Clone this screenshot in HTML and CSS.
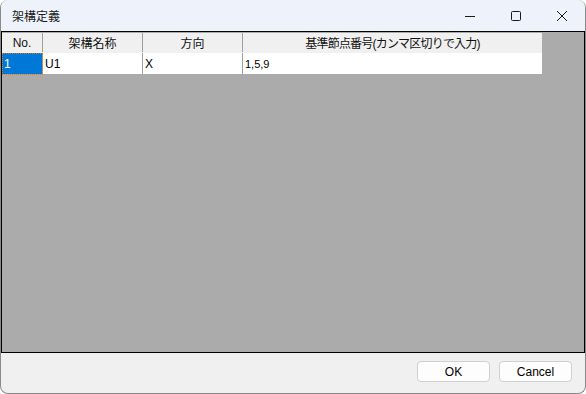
FILE: index.html
```html
<!DOCTYPE html>
<html lang="ja">
<head>
  <meta charset="UTF-8">
  <title>架構定義</title>
  <link rel="stylesheet" href="styles.css">
</head>
<body>

<div class="window">
  <div class="titlebar">
    <span class="title">架構定義</span>
    <div class="controls">
      <span class="ctl">
        <svg width="12" height="12" viewBox="0 0 12 12"><path d="M1 6.5h10" stroke="#1a1a1a" stroke-width="1"/></svg>
      </span>
      <span class="ctl">
        <svg width="12" height="12" viewBox="0 0 12 12"><rect x="1.5" y="1.5" width="9" height="9" rx="1" fill="none" stroke="#1a1a1a" stroke-width="1"/></svg>
      </span>
      <span class="ctl">
        <svg width="12" height="12" viewBox="0 0 12 12"><path d="M1 1l10 10M11 1L1 11" stroke="#1a1a1a" stroke-width="1"/></svg>
      </span>
    </div>
  </div>

  <div class="grid">
    <table class="sheet">
      <thead>
        <tr>
          <th class="c-no">No.</th>
          <th class="c-name">架構名称</th>
          <th class="c-dir">方向</th>
          <th class="c-nodes">基準節点番号(カンマ区切りで入力)</th>
        </tr>
      </thead>
      <tbody>
        <tr>
          <td class="c-no selected">1</td>
          <td>U1</td>
          <td>X</td>
          <td>1,5,9</td>
        </tr>
      </tbody>
    </table>
  </div>

  <div class="footer">
    <button class="btn">OK</button>
    <button class="btn">Cancel</button>
  </div>
</div>

</body>
</html>
```

FILE: styles.css
```css
html, body {
  margin: 0;
  padding: 0;
  background: #ffffff;
}
body {
  font-family: "Liberation Sans", "Noto Sans CJK JP", sans-serif;
  font-size: 12px;
  color: #000;
}
.window {
  width: 586px;
  height: 394px;
  box-sizing: border-box;
  border: 1px solid #8a8a8a;
  border-top: none;
  border-radius: 8px;
  overflow: hidden;
  background: #f0f0f0;
  display: flex;
  flex-direction: column;
}
.titlebar {
  height: 31px;
  flex: none;
  background: #eef3fb;
  display: flex;
  align-items: center;
}
.title {
  padding-left: 11px;
  font-size: 12px;
  color: #1a1a1a;
}
.controls {
  margin-left: auto;
  display: flex;
  height: 100%;
}
.ctl {
  width: 46px;
  display: flex;
  align-items: center;
  justify-content: center;
}
.grid {
  height: 322px;
  flex: none;
  box-sizing: border-box;
  border: 1px solid #000;
  background: #ababab;
  padding: 1px 0 0 0;
}
.sheet {
  border-collapse: collapse;
  table-layout: fixed;
  width: 540px;
}
.sheet th {
  height: 19px;
  padding: 0;
  background: #f0f0f0;
  font-weight: normal;
  text-align: center;
  color: #111;
  border-right: 1px solid #a0a0a0;
  border-bottom: 1px solid #f0f0f0;
}
.sheet th.c-nodes {
  letter-spacing: -0.8px;
}
.sheet td {
  height: 21px;
  padding: 0 0 0 2px;
  background: #fff;
  border-right: 1px solid #a0a0a0;
  border-bottom: 1px solid #ababab;
  font-size: 12px;
}
.sheet td:last-child {
  font-size: 11px;
}
.sheet th:last-child, .sheet td:last-child {
  border-right: none;
}
.c-no { width: 40px; }
.c-name { width: 99px; }
.c-dir { width: 99px; }
.sheet td.selected {
  background: #0078d7;
  color: #fff;
  outline: 1px dotted #e07a10;
  outline-offset: -1px;
}
.footer {
  flex: 1;
  display: flex;
  justify-content: flex-end;
  align-items: flex-start;
  gap: 9px;
  padding: 8px 13px 0 0;
}
.btn {
  width: 73px;
  height: 21px;
  background: #fdfdfd;
  border: 1px solid #d0d0d0;
  border-radius: 4px;
  font-family: "Liberation Sans", "Noto Sans CJK JP", sans-serif;
  font-size: 12px;
  color: #000;
  padding: 0;
}
```
